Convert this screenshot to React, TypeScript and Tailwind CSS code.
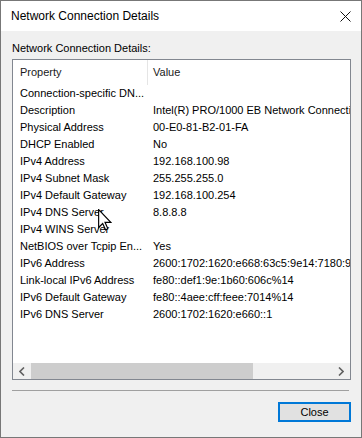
import React from 'react';

const rows: [string, string][] = [
  ['Connection-specific DN...', ''],
  ['Description', 'Intel(R) PRO/1000 EB Network Connection'],
  ['Physical Address', '00-E0-81-B2-01-FA'],
  ['DHCP Enabled', 'No'],
  ['IPv4 Address', '192.168.100.98'],
  ['IPv4 Subnet Mask', '255.255.255.0'],
  ['IPv4 Default Gateway', '192.168.100.254'],
  ['IPv4 DNS Server', '8.8.8.8'],
  ['IPv4 WINS Server', ''],
  ['NetBIOS over Tcpip En...', 'Yes'],
  ['IPv6 Address', '2600:1702:1620:e668:63c5:9e14:7180:9d2a'],
  ['Link-local IPv6 Address', 'fe80::def1:9e:1b60:606c%14'],
  ['IPv6 Default Gateway', 'fe80::4aee:cff:feee:7014%14'],
  ['IPv6 DNS Server', '2600:1702:1620:e660::1'],
];

export default function App() {
  return (
    <div
      className="relative w-[362px] h-[438px] flex flex-col border border-[#777777] bg-[#f0f0f0] text-black overflow-hidden"
      style={{ fontFamily: '"Liberation Sans", Arial, sans-serif' }}
    >
      {/* title bar */}
      <div className="h-[30px] bg-white flex items-center justify-between pl-[10px] pr-[9px]">
        <span className="text-[12px] leading-[14px]">Network Connection Details</span>
        <svg width="11" height="11" viewBox="0 0 11 11" className="mr-[1px]">
          <path d="M0.5 0.5 L10.5 10.5 M10.5 0.5 L0.5 10.5" stroke="#111" strokeWidth="1" fill="none" />
        </svg>
      </div>

      <div className="flex-1 flex flex-col pl-[11px] pr-[10px]">
        <div className="mt-[11px] text-[11px] leading-[13px]">Network Connection Details:</div>

        {/* list view */}
        <div className="mt-[4px] h-[321px] border border-[#828790] bg-white flex flex-col">
          <div className="flex-1 overflow-hidden text-[11px]">
            <div className="flex h-[25px] items-center">
              <div className="w-[134px] pl-[7px] text-[#1a1a1a]">Property</div>
              <div className="w-px h-full bg-[#e5e5e5]" />
              <div className="pl-[5px] text-[#1a1a1a]">Value</div>
            </div>
            {rows.map(([k, v]) => (
              <div key={k} className="flex h-[17px] items-center whitespace-nowrap">
                <div className="w-[135px] shrink-0 pl-[7px] overflow-hidden">{k}</div>
                <div className="pl-[5px]">{v}</div>
              </div>
            ))}
          </div>
          {/* horizontal scrollbar */}
          <div className="h-[16px] bg-[#f0f0f0] flex items-center">
            <div className="w-[18px] flex justify-center">
              <svg width="6" height="9" viewBox="0 0 6 9">
                <path d="M5 0.5 L1 4.5 L5 8.5" stroke="#606060" strokeWidth="1.6" fill="none" />
              </svg>
            </div>
            <div className="w-[222px] h-full bg-[#cdcdcd]" />
            <div className="flex-1" />
            <div className="w-[18px] flex justify-center">
              <svg width="6" height="9" viewBox="0 0 6 9">
                <path d="M1 0.5 L5 4.5 L1 8.5" stroke="#606060" strokeWidth="1.6" fill="none" />
              </svg>
            </div>
          </div>
        </div>

        <div className="mt-[10px] mr-[2px] h-px bg-[#a0a0a0]" />

        <div className="mt-[11px] flex justify-end">
          <button className="w-[73px] h-[20px] border-2 border-[#0078d7] bg-[#e1e1e1] text-[11px] leading-[13px] text-black flex items-center justify-center">
            Close
          </button>
        </div>
      </div>

      {/* mouse cursor */}
      <svg
        className="absolute left-[97px] top-[208px]"
        width="14"
        height="22"
        viewBox="0 0 12 19"
      >
        <path
          d="M0.5 0.5 L0.5 16 L4 12.5 L6.5 18 L8.5 17 L6 11.5 L11 11.5 Z"
          fill="#fff"
          stroke="#000"
          strokeWidth="1"
          strokeLinejoin="miter"
        />
      </svg>
    </div>
  );
}
